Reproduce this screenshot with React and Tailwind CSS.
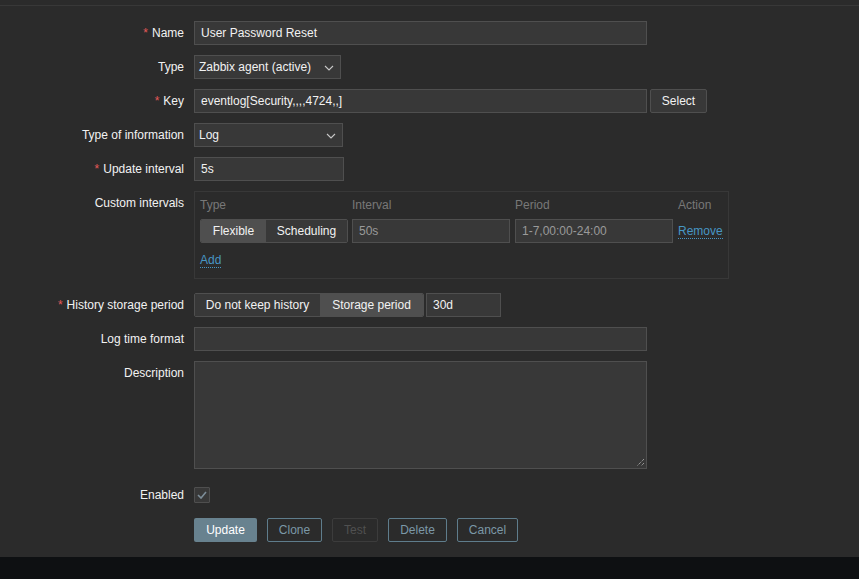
import React from 'react';

const Chevron = () => (
  <svg className="absolute right-[6px] top-[9px]" width="10" height="6" viewBox="0 0 10 6" fill="none">
    <path d="M1 1l4 4 4-4" stroke="#c8c8c8" strokeWidth="1.1" />
  </svg>
);

const Label = ({ children, required }) => (
  <div className="w-[184px] shrink-0 text-right leading-6 h-6 text-[#f2f2f2]">
    {required && <span className="text-[#e45959] mr-[4px]">*</span>}
    {children}
  </div>
);

const Input = ({ w, value, muted }) => (
  <div
    className={`h-6 border border-[#4f4f4f] bg-[#383838] px-[6px] leading-[22px] ${muted ? 'text-[#9a9a9a]' : 'text-[#f2f2f2]'}`}
    style={{ width: w }}
  >
    {value}
  </div>
);

const Select = ({ w, value }) => (
  <div className="relative h-6 border border-[#4f4f4f] bg-[#383838] pl-[4px] leading-[22px] text-[#f2f2f2]" style={{ width: w }}>
    {value}
    <Chevron />
  </div>
);

const Row = ({ label, required, children }) => (
  <div className="flex gap-[10px]">
    <Label required={required}>{label}</Label>
    <div>{children}</div>
  </div>
);

const Link = ({ children }) => (
  <span className="text-[#4796c4] border-b border-dotted border-[#4796c4] leading-[14px]">{children}</span>
);

export default function App() {
  return (
    <div className="w-[859px] h-[579px] bg-[#2b2b2b] flex flex-col text-[12px]" style={{ fontFamily: '"Liberation Sans", Arial, sans-serif' }}>
      <div className="h-[5px] shrink-0"></div>
      <div className="border-t border-[#383838] flex-1 pt-[15px] flex flex-col gap-[10px]">
        <Row label="Name" required>
          <Input w={453} value="User Password Reset" />
        </Row>
        <Row label="Type">
          <Select w={147} value="Zabbix agent (active)" />
        </Row>
        <Row label="Key" required>
          <div className="flex gap-[3px]">
            <Input w={453} value="eventlog[Security,,,,4724,,]" />
            <div className="h-6 w-[57px] border border-[#4f4f4f] bg-[#383838] text-center leading-[22px] text-[#f2f2f2] rounded-[2px]">Select</div>
          </div>
        </Row>
        <Row label="Type of information">
          <Select w={149} value="Log" />
        </Row>
        <Row label="Update interval" required>
          <Input w={150} value="5s" />
        </Row>
        <Row label="Custom intervals">
          <div className="w-[535px] h-[88px] border border-[#383838] px-[5px] pt-[2px]">
            <div className="flex h-[22px] items-center text-[#787878]">
              <div className="w-[152px]">Type</div>
              <div className="w-[163px]">Interval</div>
              <div className="w-[163px]">Period</div>
              <div>Action</div>
            </div>
            <div className="flex items-center mt-[3px]">
              <div className="flex h-6 w-[148px] border border-[#4f4f4f] rounded-[2px] overflow-hidden text-[#f2f2f2]">
                <div className="w-[65px] bg-[#4f4f4f] text-center leading-[22px]">Flexible</div>
                <div className="flex-1 bg-[#383838] text-center leading-[22px]">Scheduling</div>
              </div>
              <div className="ml-[4px]"><Input w={158} value="50s" muted /></div>
              <div className="ml-[5px]"><Input w={158} value="1-7,00:00-24:00" muted /></div>
              <div className="ml-[5px]"><Link>Remove</Link></div>
            </div>
            <div className="mt-[10px] leading-[14px]"><Link>Add</Link></div>
          </div>
        </Row>
        <div className="mt-[4px]">
          <Row label="History storage period" required>
            <div className="flex gap-[2px]">
              <div className="flex h-6 border border-[#4f4f4f] rounded-[2px] overflow-hidden text-[#f2f2f2]">
                <div className="w-[125px] bg-[#383838] text-center leading-[22px]">Do not keep history</div>
                <div className="w-[103px] bg-[#4f4f4f] text-center leading-[22px]">Storage period</div>
              </div>
              <Input w={75} value="30d" />
            </div>
          </Row>
        </div>
        <Row label="Log time format">
          <Input w={453} value="" />
        </Row>
        <Row label="Description">
          <div className="relative w-[453px] h-[108px] border border-[#4f4f4f] bg-[#383838]">
            <svg className="absolute right-[1px] bottom-[1px]" width="9" height="9" viewBox="0 0 9 9">
              <path d="M8 1L1 8M8 5L5 8" stroke="#bdbdbd" strokeWidth="1" strokeDasharray="1 1" />
            </svg>
          </div>
        </Row>
        <div className="mt-[4px]">
          <Row label="Enabled">
            <div className="h-6 flex items-center">
              <div className="w-4 h-4 border border-[#4f4f4f] bg-[#383838] rounded-[1px] flex items-center justify-center">
                <svg width="10" height="8" viewBox="0 0 10 8" fill="none">
                  <path d="M1 4l3 3 5-6" stroke="#7d8e99" strokeWidth="1.6" />
                </svg>
              </div>
            </div>
          </Row>
        </div>
        <div className="flex gap-[10px] ml-[194px] mt-[1px]">
          <div className="h-6 w-[63px] bg-[#68828f] text-white text-center leading-6 rounded-[2px]">Update</div>
          <div className="h-6 w-[55px] border border-[#5f7d8c] text-[#7b98a7] text-center leading-[22px] rounded-[2px]">Clone</div>
          <div className="h-6 w-[46px] border border-[#3c3c3c] text-[#505050] text-center leading-[22px] rounded-[2px]">Test</div>
          <div className="h-6 w-[59px] border border-[#5f7d8c] text-[#7b98a7] text-center leading-[22px] rounded-[2px]">Delete</div>
          <div className="h-6 w-[61px] border border-[#5f7d8c] text-[#7b98a7] text-center leading-[22px] rounded-[2px]">Cancel</div>
        </div>
      </div>
      <div className="h-[22px] shrink-0 bg-[#0e1012]"></div>
    </div>
  );
}
